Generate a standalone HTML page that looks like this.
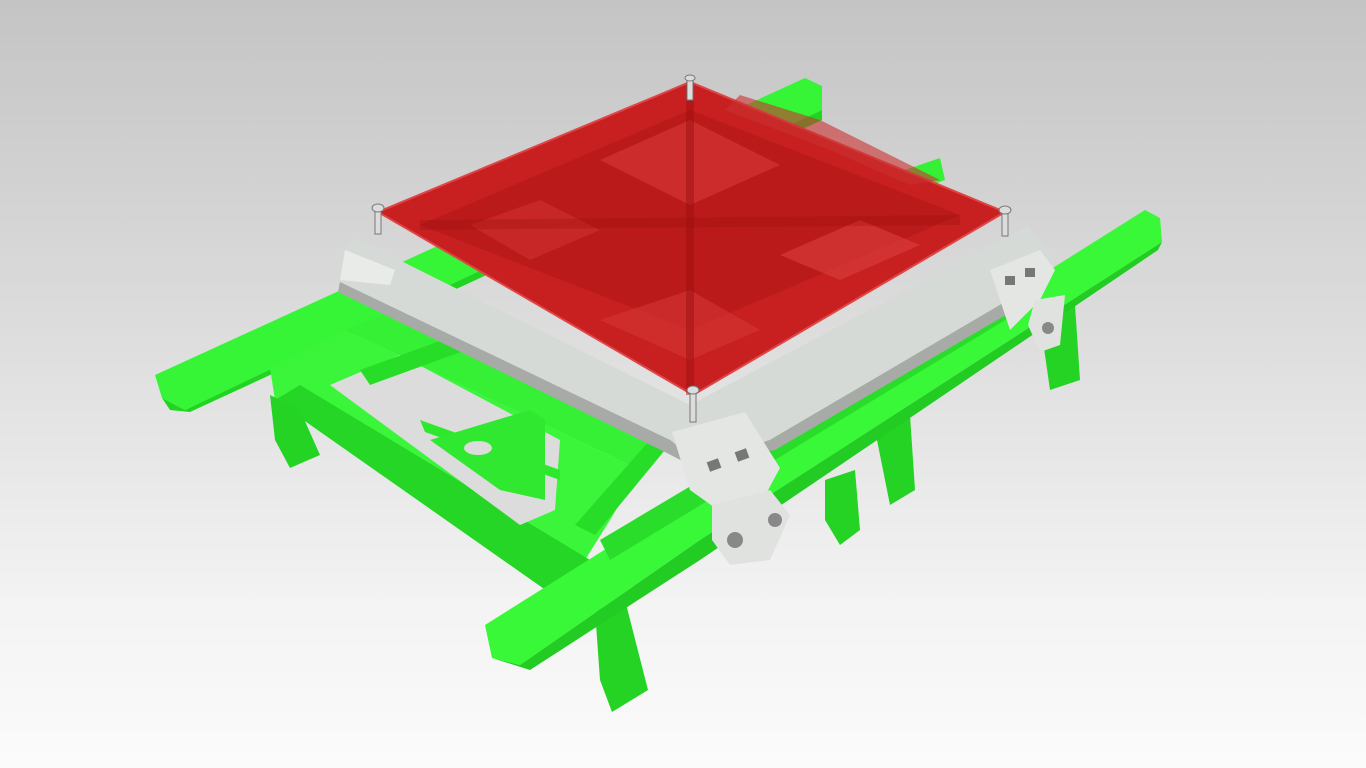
<!DOCTYPE html>
<html><head><meta charset="utf-8"><style>
html,body{margin:0;padding:0;width:1366px;height:768px;overflow:hidden}
body{background:linear-gradient(180deg,#c4c4c4 0%,#dedede 45%,#f4f4f4 80%,#fbfbfb 100%)}
svg{position:absolute;left:0;top:0}
</style></head><body>
<svg width="1366" height="768" viewBox="0 0 1366 768">
<!-- back rail -->
<polygon points="155,375 805,78 822,86 822,110 290,360 185,410 162,398" fill="#36f536"/>
<polygon points="162,398 185,410 290,360 822,110 822,120 190,412 170,410" fill="#22d422"/>
<!-- left cross frame -->
<polygon points="270,368 345,330 640,470 610,520 560,600 275,400" fill="#3af53a"/>
<polygon points="275,400 560,600 590,560 300,385" fill="#26d626"/>
<polygon points="345,330 420,300 700,420 640,470" fill="#36f036"/>
<!-- opening showing background -->
<polygon points="330,385 400,355 560,440 555,510 520,525" fill="#dcdcdc"/>
<polygon points="420,420 560,470 560,480 425,432" fill="#2ee82e"/>
<polygon points="430,440 530,410 545,420 545,500 500,490" fill="#30e830"/>
<ellipse cx="478" cy="448" rx="14" ry="7" fill="#dcdcdc"/>
<!-- diagonal braces -->
<polygon points="575,525 650,440 665,450 595,535" fill="#28dd28"/>
<polygon points="360,370 470,330 480,345 370,385" fill="#28dd28"/>
<!-- legs -->
<polygon points="270,395 300,410 320,455 290,468 275,440" fill="#24d324"/>
<polygon points="595,610 625,600 648,690 612,712 600,680" fill="#24d324"/>
<polygon points="825,480 855,470 860,530 840,545 825,520" fill="#24d324"/>
<polygon points="875,430 910,415 915,490 890,505" fill="#24d324"/>
<polygon points="1040,320 1075,305 1080,380 1050,390" fill="#24d324"/>
<!-- front rail -->
<polygon points="485,625 1145,210 1160,218 1162,242 700,540 520,665 492,658" fill="#38f838"/>
<polygon points="492,658 520,665 700,540 1162,242 1158,250 700,560 530,670" fill="#22cc22"/>
<polygon points="600,540 1020,290 1030,305 610,560" fill="#2add2a"/>
<!-- far right bit -->
<polygon points="905,170 940,158 945,180 912,192" fill="#36f036"/>
<!-- silver frame -->
<polygon points="330,265 355,238 690,405 1028,226 1055,262 1000,305 770,440 755,445 690,455 670,440 340,285" fill="#d6dad6"/>
<polygon points="340,282 670,440 690,455 755,445 770,440 1000,305 1040,290 1035,298 775,450 690,465 665,452 338,292" fill="#a7aaa7"/>
<polygon points="672,432 745,412 780,468 760,505 718,510 690,490" fill="#e3e6e3"/>
<polygon points="990,270 1040,250 1055,270 1040,300 1010,330 1000,300" fill="#e3e6e3"/>
<polygon points="345,250 395,270 390,285 340,280" fill="#e8ebe8"/>
<rect x="708" y="460" width="12" height="10" fill="#777" transform="rotate(-20 714 465)"/>
<rect x="736" y="450" width="12" height="10" fill="#777" transform="rotate(-20 742 455)"/>
<rect x="1005" y="276" width="10" height="9" fill="#777"/>
<rect x="1025" y="268" width="10" height="9" fill="#777"/>
<!-- pulleys -->
<polygon points="712,505 770,490 790,515 770,560 730,565 712,540" fill="#e0e2e0"/>
<circle cx="735" cy="540" r="8" fill="#888"/>
<circle cx="775" cy="520" r="7" fill="#888"/>
<polygon points="1035,300 1065,295 1060,345 1040,352 1028,325" fill="#e0e2e0"/>
<circle cx="1048" cy="328" r="6" fill="#888"/>
<!-- red plate -->
<polygon points="378,212 690,82 1005,212 693,395" fill="#c82020"/>
<polygon points="378,212 690,82 1005,212 693,395" fill="none" stroke="#e04545" stroke-width="2"/>
<polygon points="420,225 690,330 960,215 690,110 " fill="#a81212" opacity=".4"/>
<polygon points="600,160 690,120 780,165 690,205" fill="#d33535" opacity=".7"/>
<polygon points="780,255 860,220 920,245 840,280" fill="#d53a3a" opacity=".7"/>
<polygon points="470,225 540,200 600,230 530,260" fill="#d03030" opacity=".6"/>
<polygon points="600,320 690,290 760,330 690,360" fill="#d33535" opacity=".6"/>
<line x1="690" y1="82" x2="690" y2="395" stroke="#9a0e0e" stroke-width="8" opacity=".45"/>
<line x1="420" y1="225" x2="960" y2="220" stroke="#9a0e0e" stroke-width="10" opacity=".3"/>
<polygon points="725,110 830,150 910,185 940,180 820,120 740,95" fill="#c93030" opacity=".6"/>
<!-- screws -->
<g fill="#dcdcdc" stroke="#777" stroke-width="1">
<rect x="687" y="78" width="6" height="22"/><ellipse cx="690" cy="78" rx="5" ry="3"/>
<rect x="375" y="206" width="6" height="28"/><ellipse cx="378" cy="208" rx="6" ry="4"/>
<rect x="1002" y="208" width="6" height="28"/><ellipse cx="1005" cy="210" rx="6" ry="4"/>
<rect x="690" y="390" width="6" height="32"/><ellipse cx="693" cy="390" rx="6" ry="4"/>
</g>
</svg>
</body></html>
